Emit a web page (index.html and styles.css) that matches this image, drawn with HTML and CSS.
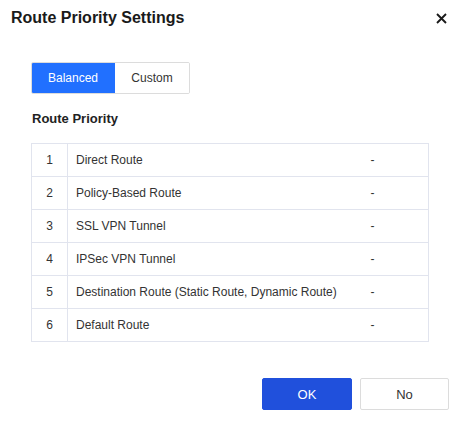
FILE: index.html
```html
<!DOCTYPE html>
<html>
<head>
<meta charset="utf-8">
<link rel="stylesheet" href="styles.css">
</head>
<body>
<div class="dialog">
  <div class="header">
    <h1 class="title">Route Priority Settings</h1>
    <button class="close" aria-label="Close">
      <svg width="11" height="11" viewBox="0 0 11 11"><path d="M1 1L10 10M10 1L1 10" stroke="#1a1a1a" stroke-width="1.9" fill="none"/></svg>
    </button>
  </div>
  <div class="body">
    <div class="segmented">
      <button class="seg seg-active">Balanced</button>
      <button class="seg">Custom</button>
    </div>
    <h2 class="section">Route Priority</h2>
    <table class="prio">
      <colgroup><col class="c-num"><col class="c-name"><col class="c-val"></colgroup>
      <tr><td class="num">1</td><td>Direct Route</td><td>-</td></tr>
      <tr><td class="num">2</td><td>Policy-Based Route</td><td>-</td></tr>
      <tr><td class="num">3</td><td>SSL VPN Tunnel</td><td>-</td></tr>
      <tr><td class="num">4</td><td>IPSec VPN Tunnel</td><td>-</td></tr>
      <tr><td class="num">5</td><td>Destination Route (Static Route, Dynamic Route)</td><td>-</td></tr>
      <tr><td class="num">6</td><td>Default Route</td><td>-</td></tr>
    </table>
  </div>
  <div class="footer">
    <button class="btn btn-primary">OK</button>
    <button class="btn btn-no">No</button>
  </div>
</div>
</body>
</html>
```
FILE: styles.css
```css
html, body {
  margin: 0;
  padding: 0;
  background: #fff;
}
body {
  font-family: Arial, "Liberation Sans", sans-serif;
  color: #333;
  font-size: 12px;
}
.dialog {
  width: 467px;
  height: 422px;
  box-sizing: border-box;
  display: flex;
  flex-direction: column;
}
.header {
  display: flex;
  align-items: center;
  justify-content: space-between;
  padding: 7px 20px 0 11px;
  height: 22px;
}
.title {
  margin: 0;
  font-size: 16px;
  font-weight: bold;
  color: #1a1a1a;
  line-height: 22px;
}
.close {
  border: 0;
  background: none;
  padding: 0;
  width: 11px;
  height: 11px;
  display: flex;
  cursor: pointer;
}
.body {
  padding: 33px 38px 0 31px;
}
.segmented {
  display: flex;
  width: max-content;
  border: 1px solid #dcdcdc;
  border-radius: 2px;
  overflow: hidden;
}
.seg {
  font-family: inherit;
  font-size: 12px;
  height: 30px;
  border: 0;
  background: #fff;
  color: #333;
  padding: 0;
  width: 83px;
}
.seg + .seg {
  width: 74px;
}
.seg-active {
  background: #2170ff;
  color: #fff;
  width: 84px;
  margin: -1px 0 -1px -1px;
  height: 32px;
  border-radius: 2px 0 0 2px;
}
.section {
  margin: 15px 0 0 1px;
  font-size: 13px;
  font-weight: bold;
  color: #222;
  line-height: 19px;
}
.prio {
  margin-top: 15px;
  width: 398px;
  border-collapse: collapse;
  table-layout: fixed;
}
.c-num { width: 36px; }
.c-val { width: 66px; }
.prio td {
  border-top: 1px solid #e1e4ee;
  border-bottom: 1px solid #e1e4ee;
  height: 32px;
  padding: 0 0 0 8px;
  color: #333;
  font-size: 12px;
  line-height: 14px;
}
.prio td:first-child {
  border-left: 1px solid #e1e4ee;
  border-right: 1px solid #e1e4ee;
  text-align: center;
  padding: 0;
}
.prio td:last-child {
  border-right: 1px solid #e1e4ee;
}
.footer {
  display: flex;
  justify-content: flex-end;
  gap: 8px;
  padding: 36px 18px 0 0;
}
.btn {
  font-family: inherit;
  font-size: 13px;
  width: 90px;
  height: 32px;
  border: 1px solid #dcdcdc;
  background: #fff;
  color: #333;
  border-radius: 2px;
  padding: 0;
}
.btn-no {
  width: 89px;
}
.btn-primary {
  background: #2050dc;
  border-color: #2050dc;
  color: #fff;
}
```
